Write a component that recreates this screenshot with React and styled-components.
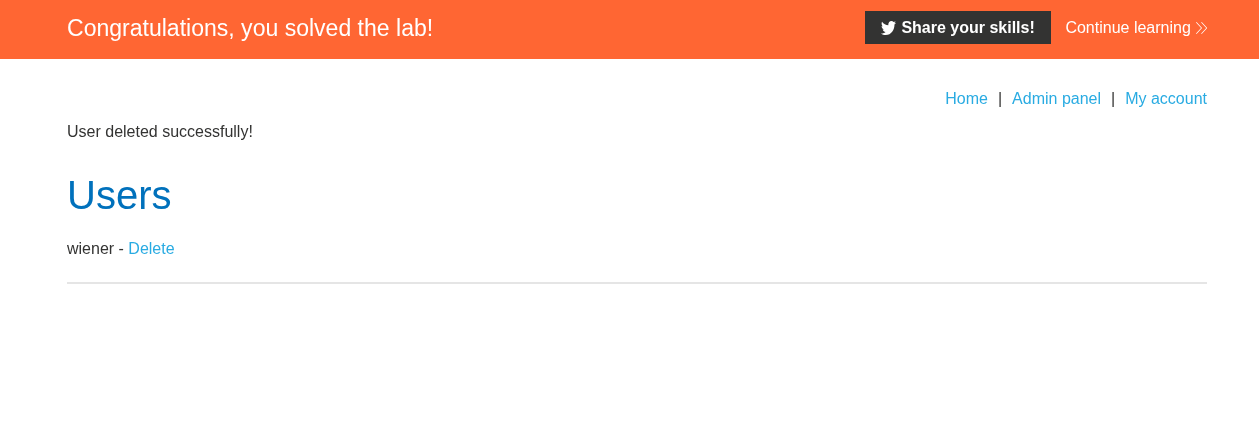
import React from "react";
import styled, { createGlobalStyle } from "styled-components";

const GlobalStyle = createGlobalStyle`
  *, *::before, *::after { box-sizing: border-box; }
  body {
    margin: 0;
    background: #fff;
    color: #333332;
    font: 16px/24px "Liberation Sans", Arial, sans-serif;
  }
`;

const Page = styled.div`
  will-change: transform;
`;

const Banner = styled.header`
  height: 59px;
  padding: 11px 52px 0 67px;
  display: flex;
  align-items: flex-start;
  justify-content: space-between;
  background: #ff6633;
  color: #fff;
`;

const BannerTitle = styled.h4`
  margin: 0;
  font-size: 23.04px;
  font-weight: 400;
  line-height: 34px;
`;

const BannerActions = styled.div`
  display: flex;
  align-items: center;
  gap: 14px;
`;

const ShareButton = styled.button`
  display: flex;
  align-items: center;
  gap: 5px;
  width: 186px;
  height: 33px;
  padding: 0 0 0 16px;
  border: 0;
  background: #333332;
  color: #fff;
  font: bold 16px/33px "Liberation Sans", Arial, sans-serif;
  white-space: nowrap;
`;

const ContinueLink = styled.a`
  display: flex;
  align-items: center;
  gap: 5px;
  color: #fff;
  line-height: 33px;
  white-space: nowrap;
`;

const Icon = styled.svg`
  display: block;
  flex: none;
  fill: currentColor;
`;

const Content = styled.main`
  padding: 28px 52px 0 67px;
`;

const Nav = styled.nav`
  display: flex;
  justify-content: flex-end;
  gap: 10px;
`;

const Link = styled.a`
  color: #29abe2;
  text-decoration: none;
`;

const Message = styled.p`
  margin: 9px 0 0;
`;

const Heading = styled.h1`
  margin: 27px 0 0;
  color: #0071bc;
  font-size: 40px;
  font-weight: 400;
  line-height: 48px;
`;

const UserRow = styled.div`
  margin-top: 18px;
`;

const Divider = styled.hr`
  margin: 21px 0 0;
  border: 0;
  height: 2px;
  background: #e5e5e5;
`;

const TwitterIcon = () => (
  <Icon width="15" height="14" viewBox="0 48 512 416" preserveAspectRatio="none" aria-hidden="true">
    <path d="M459.37 151.716c.325 4.548.325 9.097.325 13.645 0 138.72-105.583 298.558-298.558 298.558-59.452 0-114.68-17.219-161.137-47.106 8.447.974 16.568 1.299 25.34 1.299 49.055 0 94.213-16.568 130.274-44.832-46.132-.975-84.792-31.188-98.112-72.772 6.498.974 12.995 1.624 19.818 1.624 9.421 0 18.843-1.3 27.614-3.573-48.081-9.747-84.143-51.98-84.143-102.985v-1.299c13.969 7.797 30.214 12.67 47.431 13.319-28.264-18.843-46.781-51.005-46.781-87.391 0-19.492 5.197-37.36 14.294-52.954 51.655 63.675 129.3 105.258 216.365 109.807-1.624-7.797-2.599-15.918-2.599-24.04 0-57.828 46.782-104.934 104.934-104.934 30.213 0 57.502 12.67 76.67 33.137 23.715-4.548 46.456-13.32 66.599-25.34-7.798 24.366-24.366 44.833-46.132 57.827 21.117-2.273 41.584-8.122 60.426-16.243-14.292 20.791-32.161 39.308-52.628 54.253z" />
  </Icon>
);

const ChevronsIcon = () => (
  <Icon width="11.2" height="12" viewBox="0 0 28 30" aria-hidden="true">
    <polygon points="1.4,0 0,1.2 12.6,15 0,28.8 1.4,30 15.1,15" />
    <polygon points="14.3,0 12.9,1.2 25.6,15 12.9,28.8 14.3,30 28,15" />
  </Icon>
);

export default function App() {
  return (
    <Page>
      <GlobalStyle />
      <Banner>
        <BannerTitle>Congratulations, you solved the lab!</BannerTitle>
        <BannerActions>
          <ShareButton>
            <TwitterIcon />
            Share your skills!
          </ShareButton>
          <ContinueLink>
            Continue learning
            <ChevronsIcon />
          </ContinueLink>
        </BannerActions>
      </Banner>
      <Content>
        <Nav>
          <Link>Home</Link>
          <span>|</span>
          <Link>Admin panel</Link>
          <span>|</span>
          <Link>My account</Link>
        </Nav>
        <Message>User deleted successfully!</Message>
        <Heading>Users</Heading>
        <UserRow>
          wiener - <Link>Delete</Link>
        </UserRow>
        <Divider />
      </Content>
    </Page>
  );
}
